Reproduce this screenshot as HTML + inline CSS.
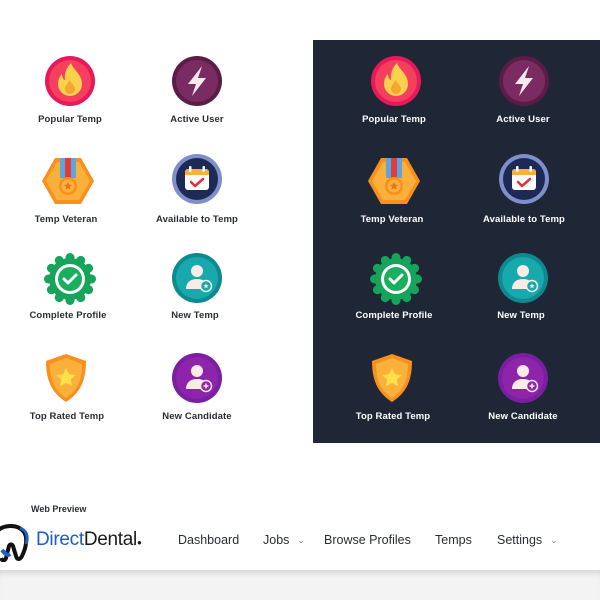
<!DOCTYPE html>
<html><head><meta charset="utf-8"><style>
body{margin:0;width:600px;height:600px;position:relative;background:#fff;font-family:"Liberation Sans",sans-serif;overflow:hidden}
.dark{position:absolute;left:313px;top:40px;width:287px;height:403px;background:#1f2636}
.b{position:absolute;width:52px;height:52px}
.l{position:absolute;width:140px;text-align:center;font-size:9.5px;font-weight:bold;color:#2a2d33;letter-spacing:.1px}
.dark2 .l{color:#fff}
.bottom{position:absolute;left:0;top:570px;width:600px;height:30px;background:#f3f3f3;box-shadow:inset 0 6px 6px -3px rgba(0,0,0,.12)}
.n{position:absolute;top:533px;font-size:12.5px;color:#2a2d33}
.chev{font-size:9px;color:#888;margin-left:8px;position:relative;top:-1px}
</style></head><body>
<svg width="0" height="0" style="position:absolute">
<defs>
<symbol id="fire" viewBox="0 0 52 52"><circle cx="26" cy="26" r="25" fill="#e8195a"/><circle cx="26" cy="26" r="21" fill="#f43f5e"/><path d="M27 8c3 8 11 11 11 21a12 12 0 0 1-24 0c0-5 2-8 4-10 0 4 2 6 3 6-1-7 2-13 6-17z" fill="#fbd14b"/><path d="M26 25c1 4 5 5 5 9a5 5 0 0 1-10 0c0-3 2-5 5-9z" fill="#f7a531"/></symbol>
<symbol id="bolt" viewBox="0 0 52 52"><circle cx="26" cy="26" r="25" fill="#5b1d47"/><circle cx="26" cy="26" r="21" fill="#7a2c62"/><path d="M31 11 17 29h8l-4 12 14-18h-8z" fill="#f7e9ee"/></symbol>
<symbol id="vet" viewBox="0 0 52 52"><path d="M13 3h26l13 23-13 23H13L0 26z" fill="#f7901e"/><path d="M15 7h22l11 19-11 19H15L4 26z" fill="#fbb03b"/><rect x="18" y="3" width="16" height="20" fill="#5aa6e0"/><rect x="23" y="3" width="6" height="20" fill="#e23b3b"/><circle cx="26" cy="31" r="9" fill="#f7901e"/><circle cx="26" cy="31" r="6.5" fill="#fbb03b"/><path d="m26 27 1.2 2.6 2.8.3-2.1 1.9.6 2.8-2.5-1.4-2.5 1.4.6-2.8-2.1-1.9 2.8-.3z" fill="#e8751a"/></symbol>
<symbol id="cal" viewBox="0 0 52 52"><circle cx="26" cy="26" r="25" fill="#7f8fc9"/><circle cx="26" cy="26" r="21" fill="#1e2a56"/><rect x="14" y="16" width="24" height="21" rx="3" fill="#fff"/><path d="M14 22v-3a3 3 0 0 1 3-3h18a3 3 0 0 1 3 3v3z" fill="#fbb03b"/><rect x="18" y="13" width="2.5" height="6" rx="1" fill="#fff"/><rect x="31.5" y="13" width="2.5" height="6" rx="1" fill="#fff"/><path d="m20 29 4 4 8-7" stroke="#e62e3b" stroke-width="2.5" fill="none" stroke-linecap="round" stroke-linejoin="round"/></symbol>
<symbol id="comp" viewBox="0 0 52 52"><g fill="#16a35a"><circle cx="26" cy="26" r="21"/>
<circle cx="26" cy="4.5" r="4.5"/><circle cx="36.75" cy="7.4" r="4.5"/><circle cx="44.6" cy="15.25" r="4.5"/><circle cx="47.5" cy="26" r="4.5"/><circle cx="44.6" cy="36.75" r="4.5"/><circle cx="36.75" cy="44.6" r="4.5"/><circle cx="26" cy="47.5" r="4.5"/><circle cx="15.25" cy="44.6" r="4.5"/><circle cx="7.4" cy="36.75" r="4.5"/><circle cx="4.5" cy="26" r="4.5"/><circle cx="7.4" cy="15.25" r="4.5"/><circle cx="15.25" cy="7.4" r="4.5"/></g><circle cx="26" cy="26" r="15" fill="#fff"/><circle cx="26" cy="26" r="12" fill="#1aae5f"/><path d="m20 26 4 4 8-8" stroke="#fff" stroke-width="3" fill="none" stroke-linecap="round" stroke-linejoin="round"/></symbol>
<symbol id="newt" viewBox="0 0 52 52"><circle cx="26" cy="26" r="25" fill="#0e8a8f"/><circle cx="26" cy="26" r="21" fill="#17a9ae"/><circle cx="26" cy="19" r="6" fill="#f7ede5"/><path d="M15 37c0-7 5-10 11-10s11 3 11 10z" fill="#f7ede5"/><circle cx="35" cy="34" r="5.5" fill="#17a9ae" stroke="#f7ede5" stroke-width="1.5"/><path d="m35 31.5.8 1.6 1.7.2-1.3 1.2.4 1.7-1.6-.9-1.6.9.4-1.7-1.3-1.2 1.7-.2z" fill="#f7ede5"/></symbol>
<symbol id="shield" viewBox="0 0 52 52"><path d="M26 2 46 9c0 20-6 32-20 41C12 41 6 29 6 9z" fill="#f7901e"/><path d="M26 6 42 12c0 17-5 27-16 34C15 39 10 29 10 12z" fill="#fbb03b"/><path d="m26 16 3 6.2 6.8.8-5 4.6 1.3 6.7-6.1-3.4-6.1 3.4 1.3-6.7-5-4.6 6.8-.8z" fill="#fde047"/></symbol>
<symbol id="cand" viewBox="0 0 52 52"><circle cx="26" cy="26" r="25" fill="#7a1fa2"/><circle cx="26" cy="26" r="21" fill="#8e24aa"/><circle cx="26" cy="19" r="6" fill="#f7ede5"/><path d="M15 37c0-7 5-10 11-10s11 3 11 10z" fill="#f7ede5"/><circle cx="35" cy="34" r="5.5" fill="#8e24aa" stroke="#f7ede5" stroke-width="1.5"/><path d="M35 31.5v5M32.5 34h5" stroke="#f7ede5" stroke-width="1.5"/></symbol>
</defs></svg>

<div class="dark"></div>

<svg class="b" style="left:44px;top:55px"><use href="#fire" width="52" height="52"/></svg><div class="l" style="left:0;top:114px">Popular Temp</div>
<svg class="b" style="left:171px;top:55px"><use href="#bolt" width="52" height="52"/></svg><div class="l" style="left:127px;top:114px">Active User</div>
<svg class="b" style="left:42px;top:155px"><use href="#vet" width="52" height="52"/></svg><div class="l" style="left:-4px;top:214px">Temp Veteran</div>
<svg class="b" style="left:171px;top:153px"><use href="#cal" width="52" height="52"/></svg><div class="l" style="left:127px;top:214px">Available to Temp</div>
<svg class="b" style="left:44px;top:253px"><use href="#comp" width="52" height="52"/></svg><div class="l" style="left:-2px;top:310px">Complete Profile</div>
<svg class="b" style="left:171px;top:252px"><use href="#newt" width="52" height="52"/></svg><div class="l" style="left:125px;top:310px">New Temp</div>
<svg class="b" style="left:40px;top:352px"><use href="#shield" width="52" height="52"/></svg><div class="l" style="left:-3px;top:411px">Top Rated Temp</div>
<svg class="b" style="left:171px;top:352px"><use href="#cand" width="52" height="52"/></svg><div class="l" style="left:127px;top:411px">New Candidate</div>

<div class="dark2">
<svg class="b" style="left:370px;top:55px"><use href="#fire" width="52" height="52"/></svg><div class="l" style="left:324px;top:114px">Popular Temp</div>
<svg class="b" style="left:498px;top:55px"><use href="#bolt" width="52" height="52"/></svg><div class="l" style="left:453px;top:114px">Active User</div>
<svg class="b" style="left:368px;top:155px"><use href="#vet" width="52" height="52"/></svg><div class="l" style="left:322px;top:214px">Temp Veteran</div>
<svg class="b" style="left:498px;top:153px"><use href="#cal" width="52" height="52"/></svg><div class="l" style="left:454px;top:214px">Available to Temp</div>
<svg class="b" style="left:370px;top:253px"><use href="#comp" width="52" height="52"/></svg><div class="l" style="left:324px;top:310px">Complete Profile</div>
<svg class="b" style="left:497px;top:252px"><use href="#newt" width="52" height="52"/></svg><div class="l" style="left:451px;top:310px">New Temp</div>
<svg class="b" style="left:366px;top:352px"><use href="#shield" width="52" height="52"/></svg><div class="l" style="left:323px;top:411px">Top Rated Temp</div>
<svg class="b" style="left:497px;top:352px"><use href="#cand" width="52" height="52"/></svg><div class="l" style="left:453px;top:411px">New Candidate</div>
</div>

<div style="position:absolute;left:31px;top:504px;font-size:9px;font-weight:bold;color:#2a2d33">Web Preview</div>
<svg style="position:absolute;left:0;top:520px" width="34" height="42" viewBox="0 0 34 42"><path d="M-4 12c8-8 22-8 28 0 4 6 2 16-2 24-2 4-5 4-6 0l-3-10c-1-2-3-2-4 0l-3 12c-1 3-4 3-5 0" fill="none" stroke="#111" stroke-width="4"/><path d="M2 30c3 4 6 6 8 4" stroke="#1f5fc8" stroke-width="4" fill="none"/><path d="M20 8c6 2 9 8 6 16" stroke="#1f5fc8" stroke-width="3" fill="none"/></svg>
<div style="position:absolute;left:36px;top:529px;font-size:19px;letter-spacing:-.3px"><span style="color:#1d5cc4">Direct</span><span style="color:#1a1a1a">Dental</span><span style="font-size:8px;color:#1a1a1a">●</span></div>
<div class="n" style="left:178px">Dashboard</div>
<div class="n" style="left:263px">Jobs<span class="chev">&#8964;</span></div>
<div class="n" style="left:324px">Browse Profiles</div>
<div class="n" style="left:435px">Temps</div>
<div class="n" style="left:497px">Settings<span class="chev">&#8964;</span></div>
<div class="bottom"></div>
</body></html>
